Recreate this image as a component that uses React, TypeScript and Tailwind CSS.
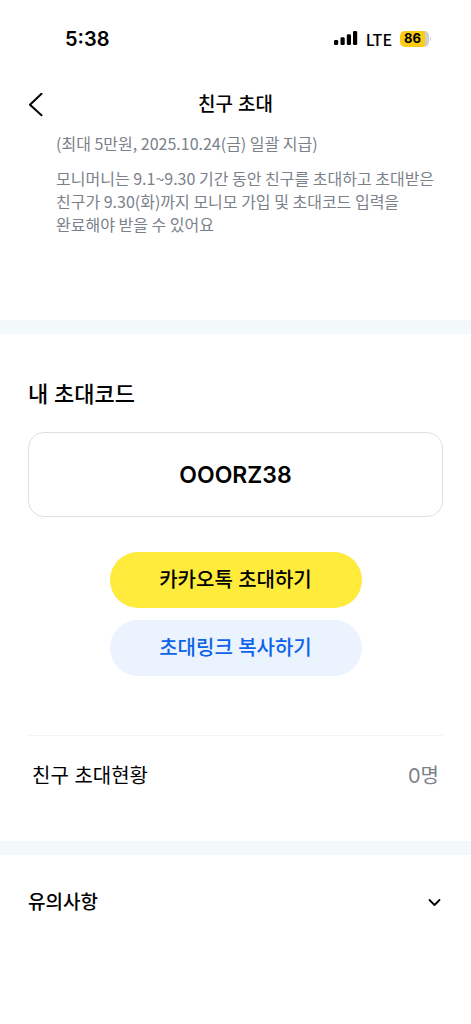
import { useState } from "react";

const NOTICES = ["초대코드는 가입할 때 한 번만 입력할 수 있어요"];

export default function App() {
  const [open, setOpen] = useState(false);

  return (
    <div className="min-h-screen bg-white font-['Inter','Noto_Sans_CJK_KR',sans-serif] text-black">
      <StatusBar />

      {/* Title bar */}
      <header className="grid grid-cols-[1fr_auto_1fr] items-center h-[54px] px-7">
        <button type="button" aria-label="뒤로" className="justify-self-start">
          <svg className="w-4 h-6" viewBox="0 0 16 24" fill="none" stroke="currentColor" strokeWidth={2}>
            <path strokeLinecap="round" strokeLinejoin="round" d="M13.5 .8 2 11.8l11.5 10.5" />
          </svg>
        </button>
        <h1 className="text-[19px] leading-7 font-medium">친구 초대</h1>
      </header>

      <section className="h-[188px] pl-14 font-['Noto_Sans_CJK_KR',sans-serif] text-base leading-[23px] text-[#7b818a] whitespace-nowrap">
        <p>(최대 5만원, 2025.10.24(금) 일괄 지급)</p>
        <p className="mt-3">
          모니머니는 9.1~9.30 기간 동안 친구를 초대하고 초대받은
          <br />
          친구가 9.30(화)까지 모니모 가입 및 초대코드 입력을
          <br />
          완료해야 받을 수 있어요
        </p>
      </section>

      <Band />

      {/* Invite code */}
      <section className="px-7 pt-11">
        <h2 className="text-[22px] leading-8 font-medium">내 초대코드</h2>
        <div className="mt-[22px] flex h-[85px] items-center justify-center rounded-2xl border border-[#dfdfe1]">
          <strong className="text-[23px] leading-8 font-semibold">OOORZ38</strong>
        </div>
        <div className="mt-[35px] flex flex-col items-center gap-3">
          <button type="button" className="h-14 w-[252px] rounded-full bg-[#ffeb3b] text-xl font-medium">
            카카오톡 초대하기
          </button>
          <button type="button" className="h-14 w-[252px] rounded-full bg-[#ebf3ff] text-xl font-medium text-[#0d63ea]">
            초대링크 복사하기
          </button>
        </div>

        {/* Invite status */}
        <div className="mt-[59px] flex h-[106px] items-start justify-between border-t border-[#f3f4f5] px-1 pt-6 text-xl leading-8">
          <span>친구 초대현황</span>
          <span className="text-[#7c8087]">0명</span>
        </div>
      </section>

      <Band />

      <section className="px-7 pt-8">
        <button
          type="button"
          aria-expanded={open}
          onClick={() => setOpen(!open)}
          className="flex w-full items-center justify-between text-[19px] leading-8 font-medium"
        >
          유의사항
          <svg
            className={`w-4 h-4 transition-transform ${open ? "rotate-180" : ""}`}
            viewBox="0 0 16 16"
            fill="none"
            stroke="currentColor"
            strokeWidth={1.8}
          >
            <path strokeLinecap="round" strokeLinejoin="round" d="m2.5 5 5 5 5-5" />
          </svg>
        </button>
        {open && (
          <ul className="mt-4 list-disc pl-5 text-base text-[#757b85]">
            {NOTICES.map((n) => (
              <li key={n}>{n}</li>
            ))}
          </ul>
        )}
      </section>
    </div>
  );
}

function Band() {
  return <div className="h-[14px] bg-[#f3f8fb]" />;
}

function StatusBar() {
  return (
    <div className="flex h-[78px] items-center justify-between pl-[65px] pr-10">
      <span className="text-xl leading-7 font-semibold">5:38</span>
      <div className="flex items-center gap-2">
        <svg className="w-6 h-4" viewBox="0 0 24 16" fill="currentColor">
          <rect x="0" y="9" width="4.2" height="5" rx="1.3" />
          <rect x="6.5" y="6.3" width="4.2" height="7.7" rx="1.3" />
          <rect x="12.8" y="3.3" width="4.2" height="10.7" rx="1.3" />
          <rect x="19" y="0" width="4.2" height="14" rx="1.3" />
        </svg>
        <span className="font-['Noto_Sans_CJK_KR',sans-serif] text-base leading-5 font-medium">LTE</span>
        <div className="flex items-center gap-px">
          <div className="flex h-4 w-[29px] items-center justify-center rounded-[5px] border-r-4 border-[#cfcfd2] bg-[#fdcc10] text-[13px] font-bold">
            86
          </div>
          <div className="h-1 w-px rounded-r bg-[#cfcfd2]" />
        </div>
      </div>
    </div>
  );
}
